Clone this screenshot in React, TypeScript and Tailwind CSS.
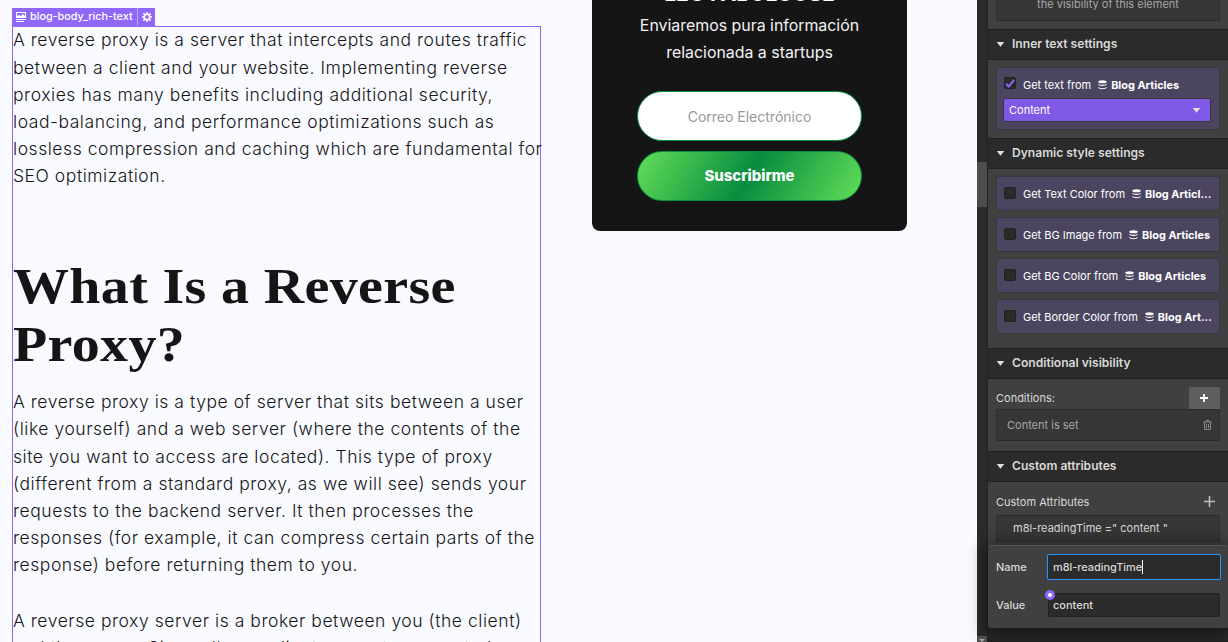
import React from "react";

const Caret = () => (
  <svg className="h-[5px] w-[9px] shrink-0" viewBox="0 0 9 5"><path d="M0.7 0h7.6L4.5 4.8z" fill="#e0e0e0" /></svg>
);

const Stack = () => (
  <svg className="mt-px h-[10px] w-[9px] shrink-0" viewBox="0 0 9 10" fill="none">
    <ellipse cx="4.5" cy="1.7" rx="4.2" ry="1.5" fill="#fff" />
    <path d="M.4 4.2c1 1.6 7.2 1.6 8.2 0M.4 7.4c1 1.8 7.2 1.8 8.2 0" stroke="#fff" strokeWidth="1.1" />
  </svg>
);

const Lines = ({ items }: { items: string[] }) => (
  <p className="-mt-[0.8px] mb-[0.8px] whitespace-nowrap text-[17.5px] font-light leading-[27.2px] tracking-[0.55px] text-[#151515]">
    {items.map((t) => <span key={t} className="block">{t}</span>)}
  </p>
);

const Header = ({ title }: { title: string }) => (
  <div className="flex h-[31px] shrink-0 items-center gap-[7px] border-y border-[#212121] bg-[#2b2b2b] pl-2">
    <Caret />
    <span className="text-[12.1px] font-semibold text-[#d9d9d9]">{title}</span>
  </div>
);

const Source = ({ label, source, checked }: { label: string; source: string; checked?: boolean }) => (
  <div className="flex h-4 items-center whitespace-nowrap text-[11px] text-white">
    <span className="-mt-0.5 mr-[7px] flex h-3 w-3 shrink-0 items-center justify-center rounded-[2px] border border-[#212121] bg-[#2b2b2b]">
      {checked && (
        <svg className="h-[9px] w-[10px]" viewBox="0 0 10 9"><path d="M1 4.8l2.7 2.7L9 1" fill="none" stroke="#8a63f0" strokeWidth="2" /></svg>
      )}
    </span>
    <span className="mr-[7px] pt-[2px]">{label}</span>
    <Stack />
    <b className="ml-1 pt-[2px] text-[10.9px] font-bold">{source}</b>
  </div>
);

const Dynamic = ({ label, source }: { label: string; source: string }) => (
  <div className="flex h-[35px] items-center rounded-[2px] border border-[#38353f] bg-[#4b4560] pl-[7px]">
    <Source label={label} source={source} />
  </div>
);

export default function App() {
  return (
    <div className="relative flex h-[642px] w-[1228px] overflow-hidden bg-[#f9faff] font-['Inter','Liberation_Sans',sans-serif]">
      <main className="ml-3 flex h-full w-[529px] shrink-0 flex-col pt-2">
        <div className="flex h-[18px] w-[143px] shrink-0 items-center bg-[#8f68f9] text-[10.8px] font-medium text-white">
          <svg className="ml-1 h-[10px] w-[10px]" viewBox="0 0 10 10">
            <path fillRule="evenodd" d="M0 0h10v6H0zM1 1v3l2-1 2 1 2-2 2 2V1zM0 7h10v1H0zM0 9h8v1H0z" fill="#fff" />
          </svg>
          <span className="ml-1 w-[107px] whitespace-nowrap">blog-body_rich-text</span>
          <span className="flex h-full flex-1 items-center justify-center border-l border-[#bda5fc]">
            <svg className="h-[10px] w-[10px]" viewBox="0 0 10 10" fill="none" stroke="#fff">
              <circle cx="5" cy="5" r="2.7" strokeWidth="1.6" />
              <path d="M5 0v2M5 8v2M0 5h2M8 5h2M1.4 1.4l1.5 1.5M7.1 7.1l1.5 1.5M1.4 8.6l1.5-1.5M7.1 2.9l1.5-1.5" strokeWidth="1.5" />
            </svg>
          </span>
        </div>
        <article className="h-[640px] shrink-0 border border-[#8f68f9] pt-[0.2px]">
          <Lines items={["A reverse proxy is a server that intercepts and routes traffic", "between a client and your website. Implementing reverse", "proxies has many benefits including additional security,", "load-balancing, and performance optimizations such as", "lossless compression and caching which are fundamental for", "SEO optimization."]} />
          <h1 className="mt-[67px] origin-left scale-x-[1.12] whitespace-nowrap font-['Liberation_Serif',serif] text-[50px] font-bold leading-[58px] tracking-[0.3px] text-[#151515]">
            What Is a Reverse<br />Proxy?
          </h1>
          <div className="mt-[16.4px]">
            <Lines items={["A reverse proxy is a type of server that sits between a user", "(like yourself) and a web server (where the contents of the", "site you want to access are located). This type of proxy", "(different from a standard proxy, as we will see) sends your", "requests to the backend server. It then processes the", "responses (for example, it can compress certain parts of the", "response) before returning them to you."]} />
          </div>
          <div className="mt-[29.4px]">
            <Lines items={["A reverse proxy server is a broker between you (the client)", "and the server. Since all your client requests are routed"]} />
          </div>
        </article>
      </main>

      <aside className="ml-[51px] flex h-[231px] w-[315px] shrink-0 flex-col items-center rounded-b-lg bg-[#151515] text-center text-white">
        <div className="-mt-[19px] h-[31px] text-[21px] font-bold leading-[26px]">LEO FABULOUSE</div>
        <p className="whitespace-nowrap text-[15.9px] leading-[27px] text-[#f2f2f2]">Enviaremos pura información<br />relacionada a startups</p>
        <div className="mt-[25px] flex h-[50px] w-[225px] items-center justify-center rounded-full border border-[#078c40] bg-white text-[14px] text-[#999]">Correo Electrónico</div>
        <div className="mt-[10px] flex h-[50px] w-[225px] items-center justify-center rounded-full border border-[#078c40] bg-[linear-gradient(120deg,#63de58,#078c40_50%,#63de58)] text-[14.9px] font-extrabold">Suscribirme</div>
      </aside>

      <section className="ml-auto flex h-full w-[251px] shrink-0 bg-[#404040] text-[11px] text-[#d9d9d9]">
        <div className="flex w-[11px] shrink-0 flex-col border-r border-[#212121] bg-[#2b2b2b] pt-[162px]">
          <div className="h-[45px] bg-[#4d4d4d]" />
          <div className="relative z-20 mt-auto flex h-1.5 items-end justify-center bg-[#4d4d4d]">
            <svg className="h-[3px] w-[6px]" viewBox="0 0 6 3"><path d="M0 0h6L3 3z" fill="#a6a6a6" /></svg>
          </div>
        </div>
        <div className="flex min-w-0 flex-1 flex-col">
          <div className="mx-2 mb-2 h-[21px] shrink-0 rounded-b-[2px] border border-t-0 border-[#2b2b2b] bg-[#363636] text-center leading-[8px] text-[#a6a6a6]">the visibility of this element</div>
          <Header title="Inner text settings" />
          <div className="mx-2 my-2 mt-[7px] h-[63px] shrink-0 rounded-[2px] border border-[#38353f] bg-[#4b4560] px-[7px] pt-2">
            <Source label="Get text from" source="Blog Articles" checked />
            <div className="-ml-px mr-px mt-[6px] flex h-6 items-center justify-between rounded-[2px] border border-[#38353f] bg-[#8059e6] pl-[5px] pr-[9px] text-white"><span>Content</span><Caret /></div>
          </div>
          <Header title="Dynamic style settings" />
          <div className="mx-2 mb-[14px] mt-[7px] flex flex-col gap-[6px]">
            <Dynamic label="Get Text Color from" source="Blog Articl..." />
            <Dynamic label="Get BG Image from" source="Blog Articles" />
            <Dynamic label="Get BG Color from" source="Blog Articles" />
            <Dynamic label="Get Border Color from" source="Blog Art..." />
          </div>
          <Header title="Conditional visibility" />
          <div className="mx-2 mt-2 flex h-[22px] shrink-0 items-center justify-between">
            <span>Conditions:</span>
            <span className="flex h-[22px] w-[31px] items-center justify-center rounded-t-[2px] bg-[#5e5e5e]">
              <svg className="mr-px h-2 w-2" viewBox="0 0 8 8"><path d="M4 0v8M0 4h8" stroke="#fff" strokeWidth="1.8" /></svg>
            </span>
          </div>
          <div className="mx-2 mb-[10px] flex h-8 shrink-0 items-center justify-between rounded-[2px] border border-[#2b2b2b] bg-[#363636] pl-[10px] pr-[7px] text-[#a6a6a6]">
            <span>Content is set</span>
            <svg className="h-[10px] w-[9px]" viewBox="0 0 9 10" fill="none" stroke="#8a8a8a"><path d="M0 2h9M3 1.5v-1h3v1M1.5 2v7.5h6V2M3.5 4v4M5.5 4v4" /></svg>
          </div>
          <Header title="Custom attributes" />
          <div className="mx-2 mt-[9px] flex h-[22px] shrink-0 items-center justify-between pr-[5px]">
            <span>Custom Attributes</span>
            <svg className="-mt-0.5 h-[11px] w-[11px]" viewBox="0 0 11 11"><path d="M5.5 0v11M0 5.5h11" stroke="#bdbdbd" strokeWidth="1.6" /></svg>
          </div>
          <div className="mx-2 mt-[2px] flex h-[27px] shrink-0 items-center rounded-[2px] border border-[#2b2b2b] bg-[#363636] pl-4">m8l-readingTime =" content "</div>
          <div className="z-10 mt-[3px] h-[83px] shrink-0 rounded border-t border-[#555] bg-[#404040] px-2 pt-2 shadow-[0_3px_16px_4px_rgba(0,0,0,0.45)]">
            <div className="flex items-center">
              <span className="w-[51px] shrink-0 font-medium">Name</span>
              <span className="flex h-[26px] w-[174px] shrink-0 items-center rounded-[2px] border border-[#2996ff] bg-[#2b2b2b] pl-[5px] text-[10.9px] font-medium">m8l-readingTime<i className="h-[14px] w-px bg-white" /></span>
            </div>
            <div className="mt-[13px] flex items-center">
              <span className="w-[52px] font-medium">Value</span>
              <span className="relative flex h-6 w-[172px] shrink-0 items-center rounded-[2px] border border-[#212121] bg-[#2b2b2b] pl-1 font-medium">
                content
                <i className="absolute -left-[4px] -top-[4px] h-[10px] w-[10px] rounded-full border-[3px] border-[#8f68f9] bg-white" />
              </span>
            </div>
          </div>
          <div className="flex-1 border-b border-[#1f1f1f] bg-[#292929]" />
        </div>
      </section>
    </div>
  );
}
